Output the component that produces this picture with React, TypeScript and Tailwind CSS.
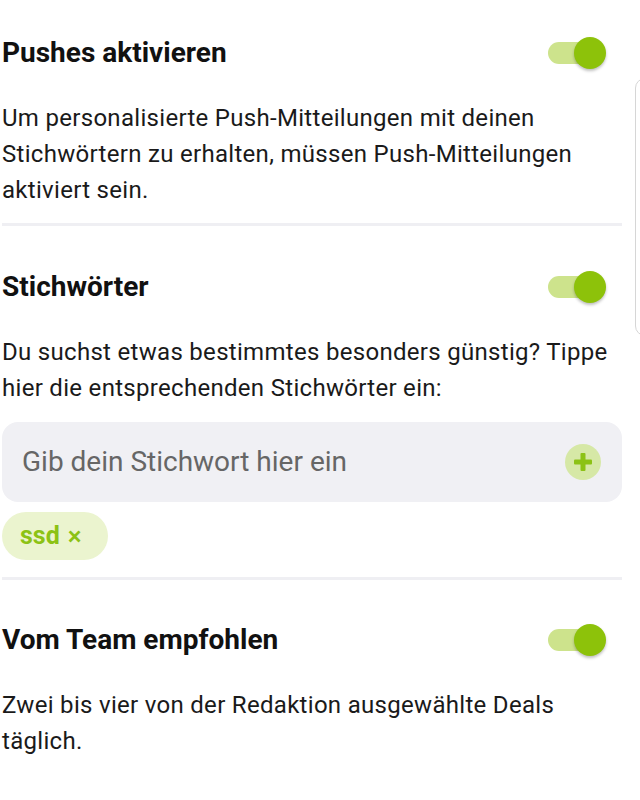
import React from "react";

function Toggle() {
  return (
    <div className="relative w-[60px] h-[36px] shrink-0">
      <div className="absolute left-[2px] top-[7px] w-[50px] h-[22px] rounded-full bg-[#cde38c]" />
      <div className="absolute left-[28px] top-[2px] w-[32px] h-[32px] rounded-full bg-[#8dc20a] shadow-[0_2px_3px_rgba(0,0,0,0.25)]" />
    </div>
  );
}

function Header({ title }: { title: string }) {
  return (
    <div className="flex items-center justify-between h-[36px]">
      <h2 className="text-[28px] font-bold text-[#111] leading-none">{title}</h2>
      <div className="mr-[16px]">
        <Toggle />
      </div>
    </div>
  );
}

export default function App() {
  return (
    <div
      className="relative w-[640px] h-[800px] bg-white overflow-hidden pl-[2px] pr-[18px]"
      style={{ fontFamily: "Roboto, 'Noto Sans', Arial, sans-serif" }}
    >
      <div className="pt-[35px]">
        <Header title="Pushes aktivieren" />
        <p className="mt-[29px] text-[24px] leading-[36px] tracking-[0.3px] text-[#1a1a1a]">
          Um personalisierte Push-Mitteilungen mit deinen Stichwörtern zu erhalten, müssen Push-Mitteilungen aktiviert sein.
        </p>
        <div className="mt-[15px] h-[3px] bg-[#efeff3]" />
      </div>

      <div className="pt-[43px]">
        <Header title="Stichwörter" />
        <p className="mt-[29px] text-[24px] leading-[36px] tracking-[0.3px] text-[#1a1a1a]">
          Du suchst etwas bestimmtes besonders günstig? Tippe hier die entsprechenden Stichwörter ein:
        </p>
        <div className="mt-[16px] h-[80px] rounded-[16px] bg-[#f0f0f4] flex items-center justify-between pl-[20px] pr-[21px]">
          <span className="text-[28px] text-[#666]">Gib dein Stichwort hier ein</span>
          <div className="w-[36px] h-[36px] rounded-full bg-[#d6e8a6] flex items-center justify-center">
            <svg width="22" height="22" viewBox="0 0 22 22">
              <rect x="8.5" y="2" width="5" height="18" rx="1" fill="#8cc215" />
              <rect x="2" y="8.5" width="18" height="5" rx="1" fill="#8cc215" />
            </svg>
          </div>
        </div>
        <div className="mt-[10px] flex">
          <div className="h-[48px] rounded-full bg-[#ebf4cf] pl-[18px] pr-[26px] flex items-center gap-[8px] text-[25px] font-bold text-[#8cc215]">
            <span>ssd</span>
            <span className="font-medium text-[26px]">×</span>
          </div>
        </div>
        <div className="mt-[17px] h-[3px] bg-[#efeff3]" />
      </div>

      <div className="pt-[42px]">
        <Header title="Vom Team empfohlen" />
        <p className="mt-[29px] text-[24px] leading-[36px] tracking-[0.3px] text-[#1a1a1a]">
          Zwei bis vier von der Redaktion ausgewählte Deals täglich.
        </p>
      </div>

      <div className="absolute left-[635px] top-[78px] w-[30px] h-[258px] rounded-[10px] border border-[#d6d6d6] bg-white" />
    </div>
  );
}
